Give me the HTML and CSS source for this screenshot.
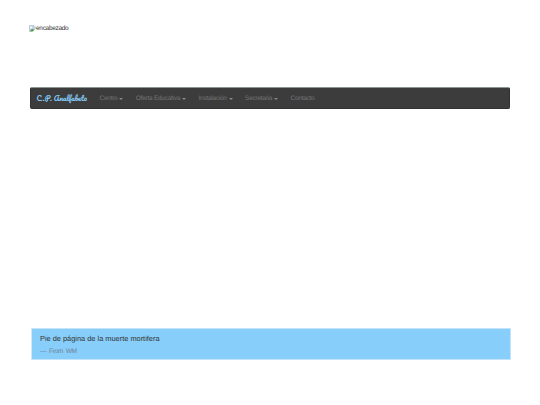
FILE: index.html
```
<!DOCTYPE html>
<html lang="es">
<head>
    <meta charset="UTF-8">
    <meta name="viewport" content="width=device-width, initial-scale=1.0">
    <title>C.P. Analfabeto</title>
    <link rel="stylesheet" href="styles.css">
</head>
<body>
<div class="container">
    <header class="header">
        <svg class="broken-image" viewBox="0 0 16 16" aria-hidden="true">
            <path d="M1 1h10l4 4v10H1z" fill="#c6d8f5" stroke="#9a9a9a"/>
            <path d="M11 1v4h4" fill="#fff" stroke="#9a9a9a"/>
            <circle cx="5" cy="5.5" r="2" fill="#fff"/>
            <path d="M2 14l5-6 3 3 3-3v6z" fill="#53a144"/>
            <path d="M16 7L8 16h8z" fill="#fff"/>
        </svg>
        <span>encabezado</span>
    </header>

    <nav class="navbar">
        <a class="brand">C.P. Analfabeto</a>
        <ul class="menu">
            <li>Centro <b class="caret"></b></li>
            <li>Oferta Educativa <b class="caret"></b></li>
            <li>Instalación <b class="caret"></b></li>
            <li>Secretaria <b class="caret"></b></li>
            <li>Contacto</li>
        </ul>
    </nav>

    <footer class="footer">
        <p>Pie de página de la muerte mortifera</p>
        <small>— From WM</small>
    </footer>
</div>
</body>
</html>
```

FILE: styles.css
```
body {
    margin: 0;
    background-color: #fff;
    font-family: "Liberation Sans", Arial, sans-serif;
    font-size: 6.5px;
    letter-spacing: -0.3px;
    color: #333;
    text-rendering: geometricPrecision;
}

.container {
    width: 480px;
    margin: 0 auto;
    padding-top: 24px;
}

.header {
    display: flex;
    align-items: center;
    height: 8px;
    margin: 0 0 55px -1px;
}

.broken-image {
    width: 7px;
    height: 7px;
}

.navbar {
    display: flex;
    align-items: center;
    box-sizing: border-box;
    height: 22px;
    padding-left: 5.5px;
    background-color: #3c3c3d;
    border: 1px solid #303232;
    border-top-color: #8b9693;
    border-radius: 2px;
}

.brand {
    width: 63px;
    padding-top: 1px;
    font-family: Pacifico, cursive;
    font-size: 7.2px;
    line-height: 10px;
    letter-spacing: 0;
    color: #87cefa;
    white-space: nowrap;
}

.menu {
    display: flex;
    gap: 12.4px;
    margin: 0;
    padding: 1px 0 0;
    list-style: none;
    line-height: 8px;
    letter-spacing: -0.26px;
    color: #747474;
}

.menu li {
    display: flex;
    align-items: center;
    white-space: nowrap;
}

.caret {
    margin-left: 2px;
    border-top: 2px solid #8a8a8a;
    border-left: 2px solid transparent;
    border-right: 2px solid transparent;
}

.footer {
    box-sizing: border-box;
    height: 32px;
    margin: 219px -0.5px 0 1px;
    padding: 5px 0 0 8px;
    background-color: #87cefa;
    border: 1px solid #c3e4fa;
    border-left-color: #d5e9f5;
}

.footer p {
    margin: 0 0 5px;
    font-size: 7.4px;
    line-height: 9px;
    letter-spacing: 0;
}

.footer small {
    display: block;
    font-size: 6.6px;
    line-height: 8px;
    letter-spacing: -0.4px;
    color: #6f8595;
    word-spacing: 1.4px;
}
```
